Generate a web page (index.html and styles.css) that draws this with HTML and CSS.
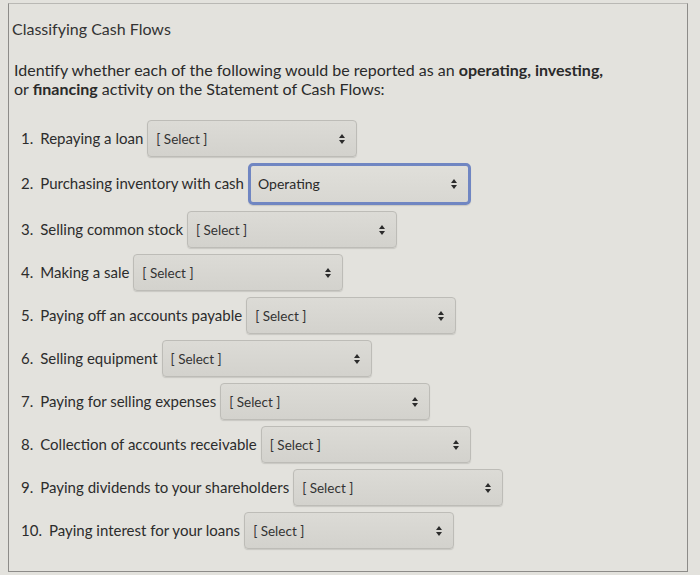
FILE: index.html
```html
<!DOCTYPE html>
<html lang="en">
<head>
<meta charset="utf-8">
<title>Classifying Cash Flows</title>
<link rel="stylesheet" href="styles.css">
</head>
<body>
<div class="panel">
  <h2 class="title">Classifying Cash Flows</h2>
  <p class="intro">Identify whether each of the following would be reported as an <strong>operating, investing,</strong> or <strong>financing</strong> activity on the Statement of Cash Flows:</p>
  <ol class="items">
    <li class="item"><span class="label"><span class="num">1.</span>Repaying a loan</span><span class="select"><span class="value">[ Select ]</span><svg class="arrows" viewBox="0 0 6 10"><path d="M3 0L6 4H0Z M3 10L6 6H0Z"/></svg></span></li>
    <li class="item"><span class="label"><span class="num">2.</span>Purchasing inventory with cash</span><span class="select focus"><span class="value op">Operating</span><svg class="arrows" viewBox="0 0 6 10"><path d="M3 0L6 4H0Z M3 10L6 6H0Z"/></svg></span></li>
    <li class="item"><span class="label"><span class="num">3.</span>Selling common stock</span><span class="select"><span class="value">[ Select ]</span><svg class="arrows" viewBox="0 0 6 10"><path d="M3 0L6 4H0Z M3 10L6 6H0Z"/></svg></span></li>
    <li class="item"><span class="label"><span class="num">4.</span>Making a sale</span><span class="select"><span class="value">[ Select ]</span><svg class="arrows" viewBox="0 0 6 10"><path d="M3 0L6 4H0Z M3 10L6 6H0Z"/></svg></span></li>
    <li class="item"><span class="label"><span class="num">5.</span>Paying off an accounts payable</span><span class="select"><span class="value">[ Select ]</span><svg class="arrows" viewBox="0 0 6 10"><path d="M3 0L6 4H0Z M3 10L6 6H0Z"/></svg></span></li>
    <li class="item"><span class="label"><span class="num">6.</span>Selling equipment</span><span class="select"><span class="value">[ Select ]</span><svg class="arrows" viewBox="0 0 6 10"><path d="M3 0L6 4H0Z M3 10L6 6H0Z"/></svg></span></li>
    <li class="item"><span class="label"><span class="num">7.</span>Paying for selling expenses</span><span class="select"><span class="value">[ Select ]</span><svg class="arrows" viewBox="0 0 6 10"><path d="M3 0L6 4H0Z M3 10L6 6H0Z"/></svg></span></li>
    <li class="item"><span class="label"><span class="num">8.</span>Collection of accounts receivable</span><span class="select"><span class="value">[ Select ]</span><svg class="arrows" viewBox="0 0 6 10"><path d="M3 0L6 4H0Z M3 10L6 6H0Z"/></svg></span></li>
    <li class="item"><span class="label"><span class="num">9.</span>Paying dividends to your shareholders</span><span class="select"><span class="value">[ Select ]</span><svg class="arrows" viewBox="0 0 6 10"><path d="M3 0L6 4H0Z M3 10L6 6H0Z"/></svg></span></li>
    <li class="item"><span class="label"><span class="num">10.</span>Paying interest for your loans</span><span class="select"><span class="value">[ Select ]</span><svg class="arrows" viewBox="0 0 6 10"><path d="M3 0L6 4H0Z M3 10L6 6H0Z"/></svg></span></li>
  </ol>
</div>
</body>
</html>
```
FILE: styles.css
```css
html, body {
  margin: 0;
  padding: 0;
}
body {
  background: #e3e2dd;
  font-family: Lato, "Open Sans", "Liberation Sans", sans-serif;
  color: #2c2c2c;
  width: 700px;
  height: 575px;
  overflow: hidden;
}
.panel {
  box-sizing: border-box;
  margin: 3px 12px 0 8px;
  height: 569px;
  border: 1px solid #8d8c89;
  border-top-color: #b9b8b4;
  padding: 15px 0 0 3px;
}
.title {
  margin: 0;
  font-size: 16px;
  font-weight: 400;
  line-height: 20px;
  color: #333;
}
.intro {
  margin: 21px 0 0 2px;
  width: 596px;
  font-size: 16px;
  line-height: 19px;
  color: #2a2a2a;
}
.intro strong {
  font-weight: 700;
}
.items {
  list-style: none;
  margin: 22px 0 0 0;
  padding: 0 0 0 9px;
}
.item {
  display: flex;
  align-items: baseline;
  gap: 4px;
  margin-bottom: 6px;
  font-size: 15px;
  color: #2c2c2c;
}
.num {
  display: inline-block;
  margin-right: 7px;
}
.select {
  position: relative;
  display: inline-block;
  box-sizing: border-box;
  width: 210px;
  height: 37px;
  padding: 8px 8px 11px 8px;
  line-height: 18px;
  border: 1px solid #bdbcb7;
  border-radius: 4px;
  background: linear-gradient(#dcdbd6, #d3d2cd);
  box-shadow: 0 1px 1px rgba(0,0,0,0.12);
}
.value {
  font-size: 13.5px;
  color: #333;
}
.value.op {
  font-size: 14px;
  color: #2a2a2a;
}
.select.focus {
  width: 223px;
  height: 42px;
  padding: 8px 7px 10px 7px;
  border: 3px solid #7086c2;
  border-radius: 5px;
  background: linear-gradient(#e0dfda, #d8d7d2);
}
.arrows {
  position: absolute;
  right: 11px;
  top: 50%;
  width: 6px;
  height: 10px;
  margin-top: -5px;
  fill: #2b2b2b;
}
```
